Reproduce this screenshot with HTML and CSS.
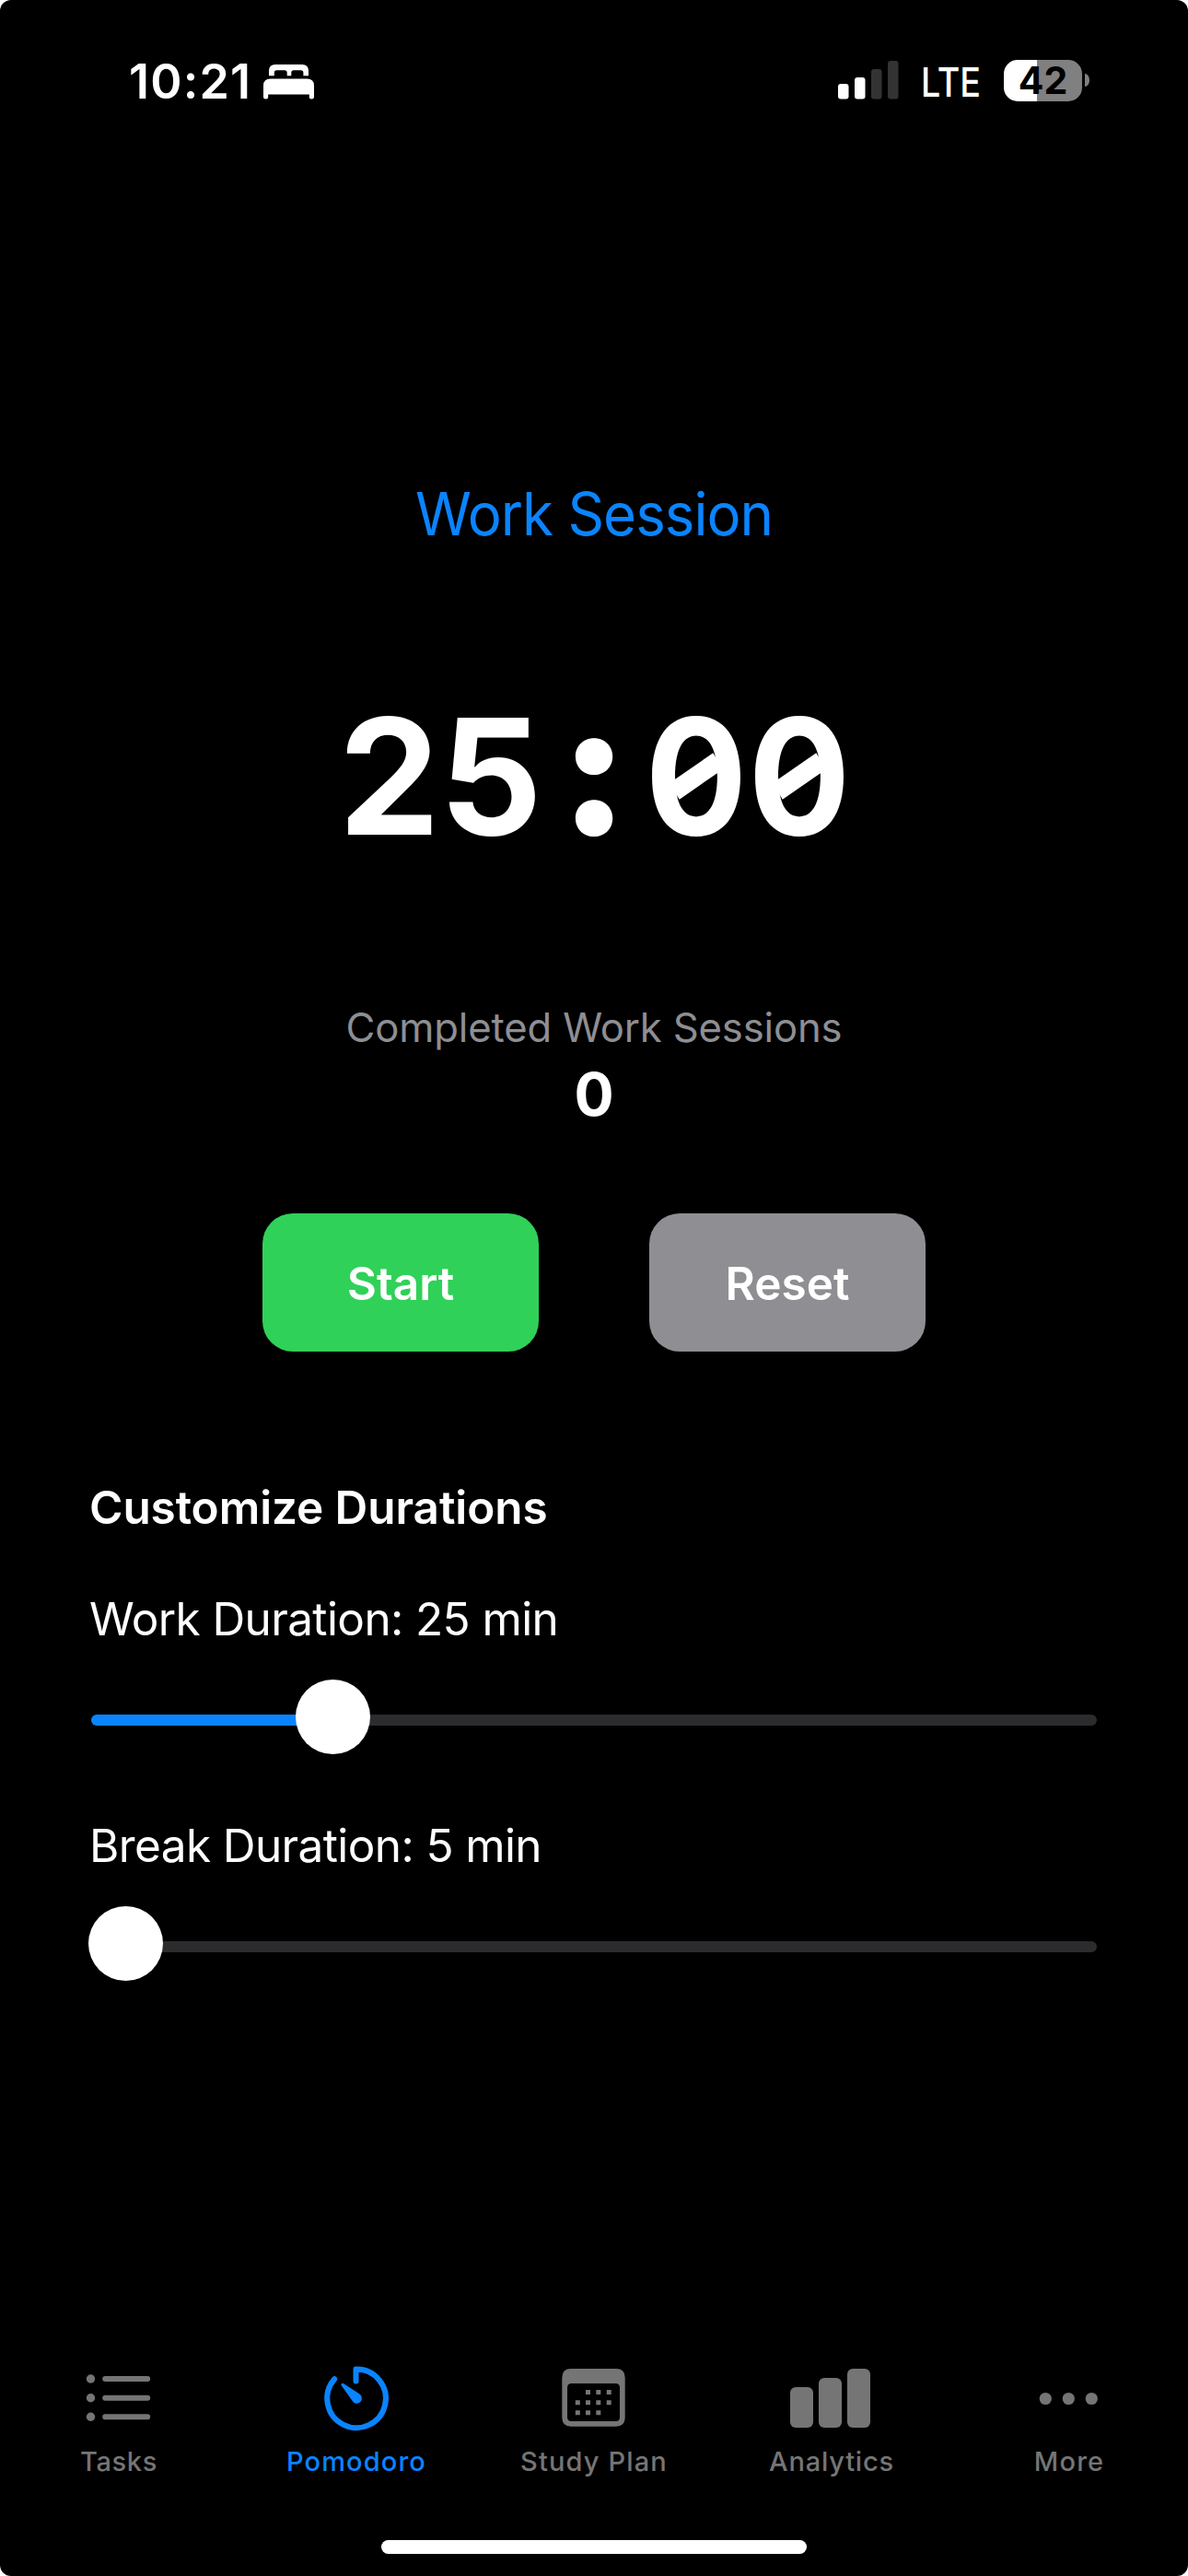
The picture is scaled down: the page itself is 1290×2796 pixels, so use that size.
FILE: index.html
```html
<!DOCTYPE html>
<html lang="en">
<head>
<meta charset="utf-8">
<title>Pomodoro</title>
<link rel="stylesheet" href="styles.css">
</head>
<body>
<div class="screen">
  <header class="status">
    <div class="status-left">
      <span class="clock">10:21</span>
      <svg class="bed" width="56" height="38" viewBox="0 0 56 38" fill="#fff">
        <path d="M6 12.300V7q0-7 7-7h29q7 0 7 7v5.300h-5.600V9q0-2.700-2.700-2.700H33q-2.700 0-2.700 2.700v3.300h-4.600V9q0-2.700-2.700-2.700h-8.500q-2.700 0-2.700 2.700v3.300z"/>
        <path d="M0 23q0-7.500 7.500-7.500h40q7.500 0 7.500 7.500v12q0 2.500-2.600 2.500t-2.600-2.500v-2.500H5.200v2.500q0 2.500-2.600 2.500T0 35z"/>
      </svg>
    </div>
    <div class="status-right">
      <svg class="signal" width="66" height="42" viewBox="0 0 66 42">
        <rect x="0" y="25" width="11.500" height="16.500" rx="3" fill="#fff"/>
        <rect x="18" y="18" width="11.500" height="23.500" rx="3" fill="#fff"/>
        <rect x="36" y="9" width="11.500" height="32.500" rx="3" fill="#333"/>
        <rect x="54" y="0" width="11.500" height="41.500" rx="3" fill="#333"/>
      </svg>
      <span class="network">LTE</span>
      <span class="battery">42</span>
      <span class="battery-cap"></span>
    </div>
  </header>

  <main class="content">
    <h1 class="session">Work Session</h1>
    <div class="timer">
      <span class="two">2</span><span>5</span><span class="colon">:</span><span class="zero">0</span><span class="zero">0</span>
    </div>
    <p class="completed">Completed Work Sessions</p>
    <p class="count">0</p>
    <div class="actions">
      <button class="button start">Start</button>
      <button class="button reset">Reset</button>
    </div>

    <section class="durations">
      <h2 class="heading">Customize Durations</h2>
      <label class="label">Work Duration: 25 min</label>
      <div class="slider"><div class="fill"></div><div class="knob"></div></div>
      <label class="label">Break Duration: 5 min</label>
      <div class="slider"><div class="knob"></div></div>
    </section>
  </main>

  <nav class="tabs">
    <a class="tab">
      <svg width="80" height="80" viewBox="0 0 80 80" fill="currentColor">
        <circle cx="9.500" cy="19" r="4.700"/><circle cx="9.500" cy="39.700" r="4.700"/><circle cx="9.500" cy="60.300" r="4.700"/>
        <path d="M25.200 19h46M25.200 39.700h46M25.200 60.300h46" stroke="currentColor" stroke-width="6" stroke-linecap="round"/>
      </svg>
      <span class="tasks">Tasks</span>
    </a>
    <a class="tab active">
      <svg width="80" height="80" viewBox="0 0 80 80">
        <path d="M39.500 21.500V8.500A31.800 31.800 0 1 1 16.200 19.300" fill="none" stroke="currentColor" stroke-width="6" stroke-linecap="round" stroke-linejoin="round"/>
        <path d="M26.200 24.200a1.600 1.600 0 0 0-2.300 2.300L35.300 42.600a5.600 5.600 0 1 0 7.500-7.500z" fill="currentColor"/>
      </svg>
      <span>Pomodoro</span>
    </a>
    <a class="tab">
      <svg width="80" height="80" viewBox="0 0 80 80" fill="currentColor">
        <path fill-rule="evenodd" d="M15 8h49q9.700 0 9.700 9.700v43.300q0 9.700-9.700 9.700H15q-9.700 0-9.700-9.700V17.700Q5.300 8 15 8zM15.500 24q-4.500 0-4.500 4.500v32q0 4.500 4.500 4.500h48q4.500 0 4.500-4.500v-32q0-4.500-4.500-4.500z"/>
        <path d="M31 31h5v5h-5zM42.300 31h5v5h-5zM53.700 31h5v5h-5zM19.800 42.200h5v5h-5zM31 42.200h5v5h-5zM42.300 42.200h5v5h-5zM53.700 42.200h5v5h-5zM19.800 53.300h5v5h-5zM31 53.300h5v5h-5zM42.300 53.300h5v5h-5z"/>
      </svg>
      <span>Study Plan</span>
    </a>
    <a class="tab">
      <svg width="90" height="80" viewBox="0 0 90 80" fill="currentColor">
        <rect x="0" y="28" width="25" height="44" rx="6"/><rect x="31" y="18" width="25" height="54" rx="6"/><rect x="62" y="8" width="25" height="64" rx="6"/>
      </svg>
      <span class="analytics">Analytics</span>
    </a>
    <a class="tab">
      <svg width="80" height="80" viewBox="0 0 80 80" fill="currentColor">
        <circle cx="14.300" cy="40.500" r="6.600"/><circle cx="39.300" cy="40.500" r="6.600"/><circle cx="64.300" cy="40.500" r="6.600"/>
      </svg>
      <span>More</span>
    </a>
  </nav>
  <div class="home"></div>
</div>
</body>
</html>
```
FILE: styles.css
```css
* { box-sizing: border-box; margin: 0; padding: 0; }

body {
  background: #fff;
  font-family: Inter, "Liberation Sans", sans-serif;
  color: #fff;
}

.screen {
  display: flex;
  flex-direction: column;
  width: 1290px;
  height: 2796px;
  background: #000;
  border-radius: 12px;
  overflow: hidden;
}

/* Status bar */
.status {
  display: flex;
  justify-content: space-between;
  align-items: center;
  height: 176px;
  padding: 0 107px 0 140px;
}

.status-left, .status-right { display: flex; align-items: center; }

.clock { margin-top: 1px; font-size: 52px; font-weight: 570; letter-spacing: 1.2px; line-height: 60px; }
.bed { margin: 2px 0 0 13px; }
.signal { margin-top: -2px; }

.network {
  width: 66px;
  margin: 2px 0 0 24px;
  font-size: 44px;
  font-weight: 500;
  line-height: 60px;
  transform: scaleX(0.855);
  transform-origin: 0 50%;
}

.battery {
  width: 85px;
  height: 45px;
  margin: -2px 0 0 24px;
  border-radius: 15px;
  background: linear-gradient(90deg, #fff 36px, #808080 36px);
  color: #000;
  font-size: 41px;
  font-weight: 700;
  line-height: 44px;
  text-align: center;
}

.battery-cap {
  width: 5px;
  height: 14px;
  margin: -2px 0 0 3px;
  border-radius: 0 5px 5px 0 / 0 7px 7px 0;
  background: #808080;
}

/* Timer */
.content {
  display: flex;
  flex: 1;
  flex-direction: column;
  align-items: center;
  padding-top: 342px;
}

.session {
  color: #0a84ff;
  font-size: 64px;
  font-weight: 400;
  line-height: 80px;
  letter-spacing: -1px;
  transform: scaleX(0.965);
}

.timer {
  display: grid;
  grid-template-columns: repeat(5, 112px);
  height: 200px;
  margin-top: 144px;
  font-size: 175px;
  font-weight: 680;
  line-height: 200px;
}

.timer span { display: flex; justify-content: center; }
.timer .two { padding-left: 3px; }
.timer .colon { font-size: 200px; font-weight: 900; line-height: 182px; }
.timer .zero { position: relative; transform: translateX(-1px) scaleX(0.94); }

.zero::after {
  content: "";
  position: absolute;
  top: 90px;
  left: 26px;
  width: 60px;
  height: 21px;
  background: #fff;
  transform: rotate(-33deg);
}

.completed {
  margin-top: 146px;
  color: #8e8e93;
  font-size: 43.6px;
  line-height: 56px;
  letter-spacing: -0.14px;
}

.count { margin-top: 4px; font-size: 64px; font-weight: 680; line-height: 80px; }

.actions { display: flex; gap: 120px; margin-top: 89px; }

.button {
  width: 300px;
  height: 150px;
  border: 0;
  border-radius: 33px;
  color: #fff;
  font: 600 49.5px/152px Inter, "Liberation Sans", sans-serif;
}

.start { background: #30d158; }
.reset { background: #8e8e93; }

/* Durations */
.durations {
  display: flex;
  flex-direction: column;
  width: 100%;
  margin-top: 139px;
  padding: 0 99px 0 97px;
}

.heading { font-size: 49.5px; font-weight: 600; line-height: 60px; letter-spacing: -0.09px; }

.label { margin-top: 61px; font-size: 49.5px; line-height: 60px; letter-spacing: -0.61px; }

.slider {
  position: relative;
  display: flex;
  align-items: center;
  height: 81px;
  margin: 36px 0 8px -1px;
  background: linear-gradient(#2c2c2e, #2c2c2e) no-repeat 9px 38px / calc(100% - 15px) 12px;
}

.slider::after {
  content: "";
  position: absolute;
  top: 38px;
  right: 0;
  width: 12px;
  height: 12px;
  border-radius: 0 6px 6px 0;
  background: #2c2c2e;
}

.fill {
  width: 225px;
  height: 12px;
  margin: 7px 0 0 3px;
  border-radius: 6px 0 0 6px;
  background: #0a84ff;
}

.knob { width: 81px; height: 81px; border-radius: 50%; background: #fff; }
.fill + .knob { margin-left: -3px; }

/* Tab bar */
.tabs {
  display: grid;
  grid-template-columns: repeat(5, 258px);
  height: 194px;
}

.tab { display: flex; flex-direction: column; align-items: center; color: #757575; }

.tab span {
  margin-top: 11px;
  font-size: 29px;
  font-weight: 450;
  line-height: 36px;
  letter-spacing: 1.15px;
}

.tab .tasks { letter-spacing: 0.65px; }
.tab .analytics { letter-spacing: 0.8px; }
.active { color: #0a84ff; }

.home { width: 462px; height: 15px; margin: 0 auto 24px; border-radius: 8px; background: #fff; }
```
